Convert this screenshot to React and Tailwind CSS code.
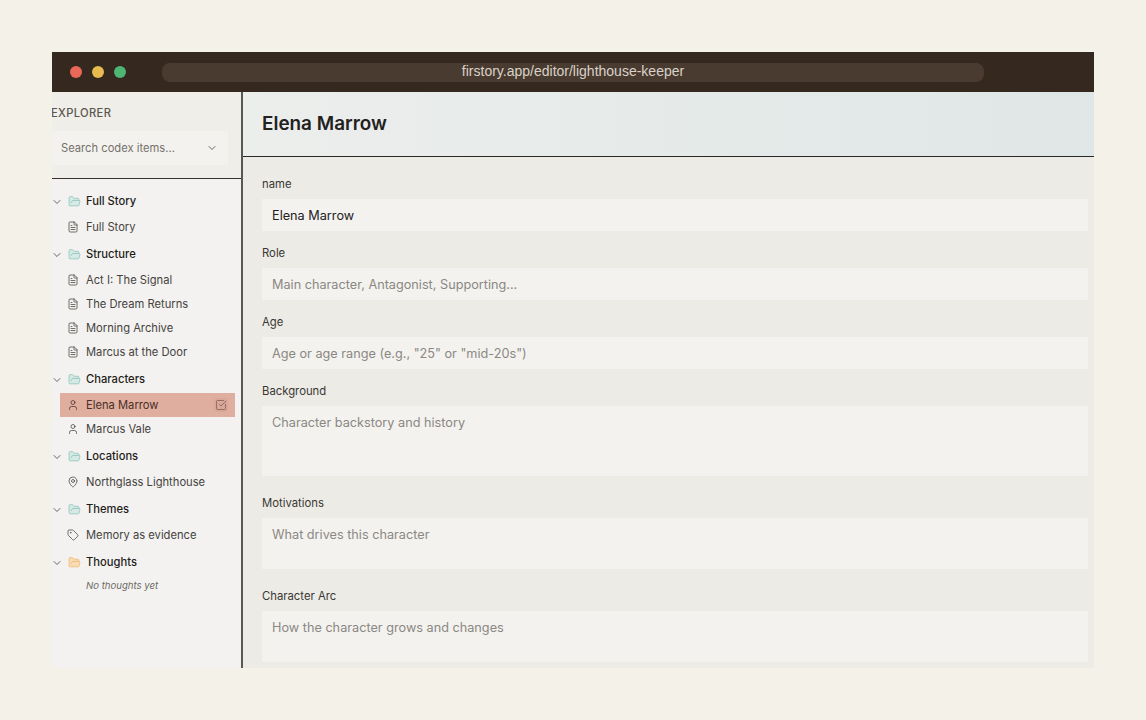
import React from 'react';
import { ChevronDown, FolderOpen, FileText, User, MapPin, Tag, SquareCheckBig } from 'lucide-react';

const tree = [
  { name: 'Full Story', items: [{ label: 'Full Story', icon: FileText }] },
  {
    name: 'Structure',
    items: [
      { label: 'Act I: The Signal', icon: FileText },
      { label: 'The Dream Returns', icon: FileText },
      { label: 'Morning Archive', icon: FileText },
      { label: 'Marcus at the Door', icon: FileText },
    ],
  },
  {
    name: 'Characters',
    items: [
      { label: 'Elena Marrow', icon: User, active: true },
      { label: 'Marcus Vale', icon: User },
    ],
  },
  { name: 'Locations', items: [{ label: 'Northglass Lighthouse', icon: MapPin }] },
  { name: 'Themes', items: [{ label: 'Memory as evidence', icon: Tag }] },
  { name: 'Thoughts', items: [], empty: 'No thoughts yet', amber: true },
];

const fields = [
  { label: 'name', value: 'Elena Marrow' },
  { label: 'Role', placeholder: 'Main character, Antagonist, Supporting...' },
  { label: 'Age', placeholder: 'Age or age range (e.g., "25" or "mid-20s")' },
  { label: 'Background', placeholder: 'Character backstory and history', area: 'h-[70px]' },
  { label: 'Motivations', placeholder: 'What drives this character', area: 'h-[51px]' },
  { label: 'Character Arc', placeholder: 'How the character grows and changes', area: 'h-[51px]' },
];

const Row = ({ item }) => {
  const Icon = item.icon;
  return (
    <div
      className={`ml-2 mr-[6px] flex h-6 items-center pl-[7px] pr-[7px] ${item.active ? 'bg-[#dfae9f] text-[#4a2f28]' : 'text-[#45423e]'}`}
    >
      <Icon size={12} strokeWidth={1.5} className="mr-[7px] shrink-0" />
      <span className="pt-px text-[11.2px] leading-none">{item.label}</span>
      {item.active && (
        <span className="ml-auto flex h-[14px] w-[14px] items-center justify-center rounded-sm bg-[#d9a799]">
          <SquareCheckBig size={12} strokeWidth={1.4} className="text-[#7a5449]" />
        </span>
      )}
    </div>
  );
};

const Group = ({ group }) => (
  <div className="mb-[3px]">
    <div className="mb-[2px] flex h-6 items-center pt-px text-[#1f1d1a]">
      <ChevronDown size={12} strokeWidth={1.6} className="-ml-px shrink-0 text-[#45423e]" />
      <FolderOpen
        size={13}
        strokeWidth={1.5}
        className={`ml-[5px] mr-[5px] shrink-0 ${group.amber ? 'fill-[#f8dcb6] text-[#f2b66d]' : 'fill-[#d6e9e5] text-[#8cc5bb]'}`}
      />
      <span className="text-[11.2px] font-medium leading-none">{group.name}</span>
    </div>
    {group.items.map((item) => (
      <Row key={item.label} item={item} />
    ))}
    {group.empty && (
      <p className="pl-[34px] pt-px text-[9.6px] italic leading-[18px] text-[#6d6a65]">{group.empty}</p>
    )}
  </div>
);

const Field = ({ field }) => (
  <div className={field.area ? 'mb-[11px]' : 'mb-[6px]'}>
    <label className="block h-[31px] pt-[4px] text-[11.3px] leading-[24px] text-[#3a3733]">{field.label}</label>
    {field.area ? (
      <div className={`${field.area} bg-[#f3f2ef] px-[10px] pt-[8px] text-[12.7px] leading-[18px] text-[#8b8883]`}>
        {field.placeholder}
      </div>
    ) : (
      <div
        className={`flex h-8 items-center bg-[#f3f2ef] px-[10px] pt-px text-[12.7px] ${field.value ? 'text-[#24211e]' : 'text-[#8b8883]'}`}
      >
        {field.value || field.placeholder}
      </div>
    )}
  </div>
);

export default function App() {
  return (
    <div className="h-screen bg-[#f4f1e8] p-[52px] font-['Inter',sans-serif]">
      <div className="flex h-[616px] flex-col overflow-hidden">
        <div className="flex h-10 shrink-0 items-center bg-[#35281e] pl-[18px] pr-[110px]">
          <div className="flex gap-[10px]">
            <span className="h-3 w-3 rounded-full bg-[#e8695a]" />
            <span className="h-3 w-3 rounded-full bg-[#e8bb50]" />
            <span className="h-3 w-3 rounded-full bg-[#4eb574]" />
          </div>
          <div className="ml-[36px] flex h-[19px] flex-1 items-center justify-center rounded-lg bg-[#4a3b30] pb-[3px] font-['Liberation_Sans',sans-serif] text-[14px] leading-none text-[#d9d2c9]">
            firstory.app/editor/lighthouse-keeper
          </div>
        </div>

        <div className="flex min-h-0 flex-1">
          <aside className="flex w-[191px] shrink-0 flex-col border-r-2 border-[#5a5753] bg-[#f3f2f0]">
            <div className="h-[87px] shrink-0 border-b border-[#35322e] bg-[#efeee9] pr-[13px]">
              <h2 className="-ml-px pt-[14px] text-[11.2px] font-medium leading-[14px] tracking-[0.03em] text-[#5b5650]">
                EXPLORER
              </h2>
              <div className="mt-[11px] flex h-[34px] items-center justify-between bg-[#f3f2ef] pl-[9px] pr-[10px]">
                <span className="text-[11.2px] text-[#75716b]">Search codex items...</span>
                <ChevronDown size={12} strokeWidth={1.6} className="text-[#45423e]" />
              </div>
            </div>
            <div className="pt-[10px]">
              {tree.map((group) => (
                <Group key={group.name} group={group} />
              ))}
            </div>
          </aside>

          <main className="min-w-0 flex-1 overflow-hidden bg-[#ecebe6]">
            <div className="flex h-[65px] items-center border-b border-[#2b2926] bg-gradient-to-r from-[#eceeec] to-[#dfe7e6] pl-[19px]">
              <h1 className="text-[18.9px] font-semibold text-[#24211e]">Elena Marrow</h1>
            </div>
            <div className="pl-[19px] pr-[6px] pt-[11px]">
              {fields.map((field) => (
                <Field key={field.label} field={field} />
              ))}
            </div>
          </main>
        </div>
      </div>
    </div>
  );
}
